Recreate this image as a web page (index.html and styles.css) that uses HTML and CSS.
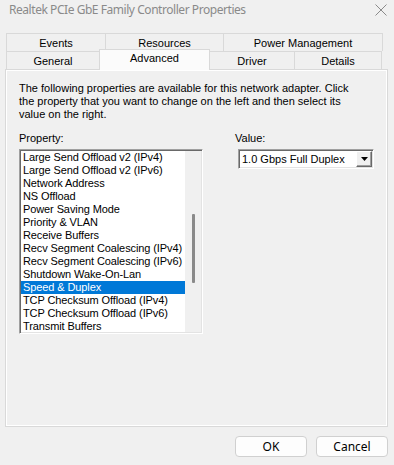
FILE: index.html
```html
<!DOCTYPE html>
<html lang="en">
<head>
  <meta charset="UTF-8">
  <title>Realtek PCIe GbE Family Controller Properties</title>
  <link rel="stylesheet" href="styles.css">
</head>
<body>
  <div class="ventana">
    <div class="titulo">
      <span class="titulo-texto">Realtek PCIe GbE Family Controller Properties</span>
      <svg class="cerrar" width="12" height="12" viewBox="0 0 12 12">
        <path d="M0.5 0.5 L11.5 11.5 M11.5 0.5 L0.5 11.5" stroke="#8a8a8a" stroke-width="1" fill="none"/>
      </svg>
    </div>

    <div class="pestanas">
      <div class="fila">
        <div class="pestana" style="width:100px">Events</div>
        <div class="pestana" style="width:119px">Resources</div>
        <div class="pestana" style="width:160px">Power Management</div>
      </div>
      <div class="fila">
        <div class="pestana" style="width:94px">General</div>
        <div class="pestana activa" style="width:111px">Advanced</div>
        <div class="pestana" style="width:86px">Driver</div>
        <div class="pestana" style="width:88px">Details</div>
      </div>
    </div>

    <div class="panel">
      <p class="descripcion">The following properties are available for this network adapter. Click the property that you want to change on the left and then select its value on the right.</p>

      <div class="columnas">
        <div class="col-propiedad">
          <div class="etiqueta">Property:</div>
          <div class="lista">
            <ul class="items">
              <li>Large Send Offload v2 (IPv4)</li>
              <li>Large Send Offload v2 (IPv6)</li>
              <li>Network Address</li>
              <li>NS Offload</li>
              <li>Power Saving Mode</li>
              <li>Priority &amp; VLAN</li>
              <li>Receive Buffers</li>
              <li>Recv Segment Coalescing (IPv4)</li>
              <li>Recv Segment Coalescing (IPv6)</li>
              <li>Shutdown Wake-On-Lan</li>
              <li class="seleccionado">Speed &amp; Duplex</li>
              <li>TCP Checksum Offload (IPv4)</li>
              <li>TCP Checksum Offload (IPv6)</li>
              <li>Transmit Buffers</li>
            </ul>
            <div class="barra">
              <div class="pulgar"></div>
            </div>
          </div>
        </div>

        <div class="col-valor">
          <div class="etiqueta">Value:</div>
          <div class="combo">
            <span class="combo-texto">1.0 Gbps Full Duplex</span>
            <span class="combo-boton">
              <svg width="7" height="4" viewBox="0 0 7 4"><path d="M0 0 H7 L3.5 4 Z" fill="#000"/></svg>
            </span>
          </div>
        </div>
      </div>
    </div>

    <div class="botones">
      <button class="boton">OK</button>
      <button class="boton boton-cancel">Cancel</button>
    </div>
  </div>
</body>
</html>
```

FILE: styles.css
```css
body {
  margin: 0;
  background-color: #f0f0f0;
  font-family: "Liberation Sans", Arial, sans-serif;
  font-size: 11px;
  color: #000;
}

.ventana {
  width: 394px;
  height: 465px;
  overflow: hidden;
}

.titulo {
  display: flex;
  align-items: center;
  justify-content: space-between;
  height: 19px;
  padding: 0 7px 0 9px;
  font-family: "Noto Sans", sans-serif;
  font-size: 12px;
  color: #8a8a8a;
}

.titulo-texto {
  letter-spacing: -0.45px;
}

.pestanas {
  margin: 14px 0 0 6px;
}

.fila {
  display: flex;
  height: 18px;
}

.pestana {
  box-sizing: border-box;
  display: flex;
  align-items: center;
  justify-content: center;
  border: 1px solid #d9d9d9;
  border-bottom: none;
  margin-right: -1px;
  background-color: #f0f0f0;
  padding-top: 1px;
}

.pestana.activa {
  position: relative;
  z-index: 2;
  height: 21px;
  margin-top: -2px;
  background-color: #fbfbfb;
  padding-top: 0;
  padding-bottom: 4px;
}

.panel {
  box-sizing: border-box;
  margin-left: 5px;
  width: 383px;
  height: 358px;
  border: 1px solid #d9d9d9;
  box-shadow: inset 1px 1px #fff, inset -1px -1px #fff;
  padding: 12px 13px 0 13px;
}

.descripcion {
  margin: 0;
  line-height: 13px;
  width: 330px;
}

.columnas {
  display: flex;
  margin-top: 11px;
}

.etiqueta {
  height: 13px;
  line-height: 13px;
  margin-bottom: 4px;
}

.col-propiedad {
  width: 185px;
}

.col-valor {
  margin-left: 32px;
}

.lista {
  box-sizing: border-box;
  display: flex;
  height: 185px;
  background: #fff;
  border: 1px solid;
  border-color: #a0a0a0 #fff #fff #a0a0a0;
  box-shadow: inset 1px 1px #696969, inset -1px -1px #e3e3e3;
  padding: 1px;
}

.items {
  list-style: none;
  margin: 0;
  padding: 0;
  flex: 1;
}

.items li {
  height: 13px;
  line-height: 13px;
  padding-left: 2px;
  white-space: nowrap;
  letter-spacing: -0.1px;
}

.items li.seleccionado {
  background-color: #0078d7;
  color: #fff;
}

.barra {
  width: 16px;
  background-color: #f0f0f0;
}

.pulgar {
  width: 3px;
  height: 69px;
  margin: 63px 0 0 7px;
  background-color: #8a8a8a;
  border-radius: 1px;
}

.combo {
  box-sizing: border-box;
  display: flex;
  align-items: center;
  justify-content: space-between;
  width: 136px;
  height: 20px;
  margin-left: 3px;
  background: #fff;
  border: 1px solid;
  border-color: #a0a0a0 #fff #fff #a0a0a0;
  box-shadow: inset 1px 1px #696969, inset -1px -1px #e3e3e3;
  padding: 1px 1px 1px 3px;
}

.combo-boton {
  box-sizing: border-box;
  display: flex;
  align-items: center;
  justify-content: center;
  width: 16px;
  height: 16px;
  background-color: #f0f0f0;
  border: 1px solid;
  border-color: #fff #696969 #696969 #fff;
  box-shadow: inset -1px -1px #a0a0a0;
}

.botones {
  display: flex;
  justify-content: flex-end;
  gap: 9px;
  margin: 9px 6px 0 0;
}

.boton {
  box-sizing: border-box;
  width: 72px;
  height: 21px;
  background-color: #fdfdfd;
  border: 1px solid #d0d0d0;
  border-radius: 4px;
  font-family: "Noto Sans", sans-serif;
  font-size: 12px;
  color: #000;
  padding: 0;
}
```
